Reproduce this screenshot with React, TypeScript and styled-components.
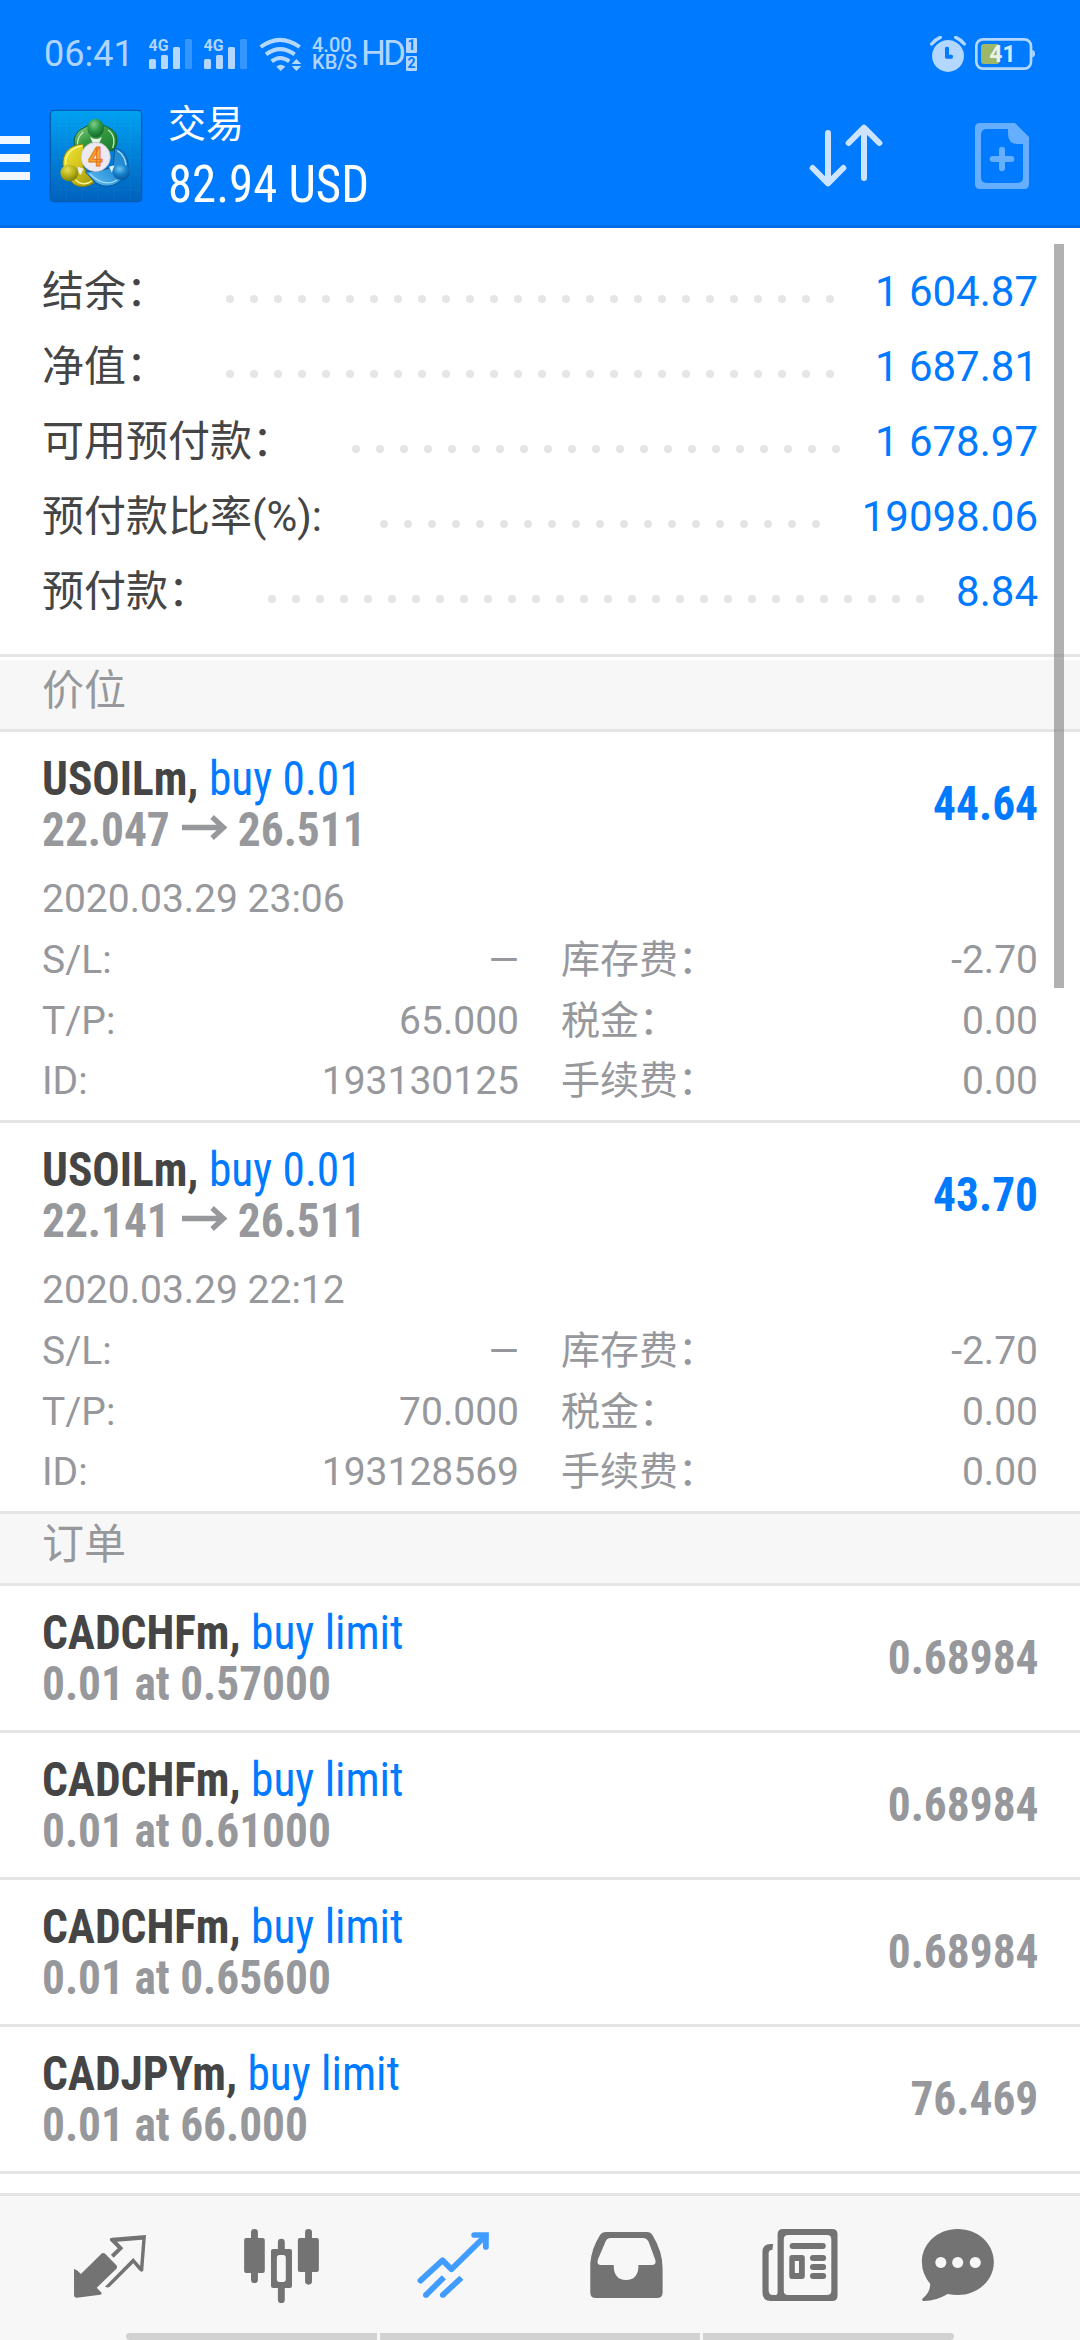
import React from "react";
import styled, { createGlobalStyle } from "styled-components";

const BLUE = "#007aff";
const GRAY = "#97989c";
const LINE = "#e5e5e5";

const GlobalStyle = createGlobalStyle`
  * { box-sizing: border-box; }
  body {
    margin: 0;
    font-family: Roboto, "Noto Sans CJK SC", sans-serif;
    background: #fff;
  }
`;

const Screen = styled.div`
  display: flex;
  flex-direction: column;
  width: 1080px;
  height: 2340px;
  overflow: hidden;
  background: #fff;
`;

const Header = styled.header`
  display: flex;
  flex-direction: column;
  height: 228px;
  flex: none;
  background: ${BLUE};
  border-bottom: 3px solid #006fe6;
`;

const StatusBar = styled.div`
  display: flex;
  align-items: center;
  height: 108px;
  padding: 0 45px 0 44px;
  color: rgba(255, 255, 255, 0.7);
`;

const Clock = styled.span`
  width: 105px;
  font-size: 36px;
  line-height: 112px;
`;

const StatusIcon = styled.svg`
  display: block;
  flex: none;
  fill: currentColor;
`;

const Speed = styled.div`
  display: flex;
  flex-direction: column;
  width: 50px;
  margin-left: 9px;
  font-size: 20px;
  font-weight: 500;
  line-height: 17px;
`;

const HdText = styled.span`
  width: 45px;
  flex: none;
  margin-left: -1px;
  font-size: 35px;
  letter-spacing: -3px;
  line-height: 110px;
`;

const SimBoxes = styled.div`
  display: flex;
  flex-direction: column;
  gap: 3px;
`;

const SimBox = styled.span`
  width: 11px;
  height: 15px;
  border-radius: 1px;
  background: rgba(255, 255, 255, 0.7);
  color: ${BLUE};
  font-size: 14px;
  font-weight: 700;
  line-height: 15px;
  text-align: center;
`;

const Spacer = styled.div`
  flex: 1;
`;

const TitleBar = styled.div`
  display: flex;
  height: 117px;
`;

const MenuButton = styled.div`
  display: flex;
  flex-direction: column;
  gap: 10px;
  width: 50px;
  padding-top: 28px;
`;

const MenuLine = styled.i`
  width: 30px;
  height: 8px;
  background: #f0f7ff;
`;

const Logo = styled.svg`
  display: block;
  width: 96px;
  height: 96px;
  margin-left: -2px;
`;

const Titles = styled.div`
  display: flex;
  flex-direction: column;
  margin-left: 24px;
  color: #fff;
`;

const ScreenName = styled.div`
  margin-top: -9px;
  font-size: 38px;
  line-height: 50px;
`;

const condensed = `
  font-family: "Roboto Condensed", Roboto, sans-serif;
  font-stretch: condensed;
  white-space: pre;
`;

const Profit = styled.div`
  ${condensed}
  font-size: 51px;
  line-height: 71px;
  transform: scaleX(0.957);
  transform-origin: left;
`;

const HeaderIcon = styled.svg`
  display: block;
  width: 320px;
  height: 117px;
`;

const Content = styled.main`
  position: relative;
  height: 1965px;
  overflow: hidden;
`;

const Scrollbar = styled.div`
  position: absolute;
  top: 16px;
  right: 16px;
  width: 10px;
  height: 744px;
  background: rgba(125, 125, 125, 0.6);
`;

const Summary = styled.section`
  padding: 26px 42px 25px;
  border-bottom: 3px solid ${LINE};
  margin-bottom: 3px;
`;

const SummaryRow = styled.div`
  display: flex;
  height: 75px;
  font-size: 42px;
  line-height: 75px;
  color: #454545;
  white-space: pre;
`;

const Leader = styled.div`
  display: flex;
  flex: 1;
  flex-wrap: wrap;
  gap: 16px;
  height: 8px;
  margin: 41px 28px 0 58px;
  overflow: hidden;
`;

const Dot = styled.i`
  width: 8px;
  height: 8px;
  border-radius: 50%;
  background: ${LINE};
`;

const SummaryValue = styled.span`
  color: ${BLUE};
`;

const SectionTitle = styled.h2`
  margin: 0;
  height: 72px;
  padding-left: 42px;
  border-bottom: 3px solid ${LINE};
  background: #f7f7f7;
  color: ${GRAY};
  font-size: 42px;
  font-weight: 400;
  line-height: 61px;
`;

const Item = styled.article<{ $tail: number }>`
  padding: 21px 42px ${(p) => p.$tail}px;
  border-bottom: 3px solid ${LINE};
`;

const ItemHead = styled.div`
  display: flex;
  align-items: center;
  justify-content: space-between;
  ${condensed}
  font-size: 48px;
  font-weight: 700;
  line-height: 51px;
  color: ${GRAY};
`;

const ItemInfo = styled.div`
  transform: scaleX(0.945);
  transform-origin: left;
`;

const ItemTitle = styled.div`
  color: #454545;
`;

const Side = styled.span`
  color: ${BLUE};
  font-weight: 400;
`;

const PriceLine = styled.div`
  display: flex;
`;

const ArrowIcon = styled.svg`
  display: block;
  width: 49px;
  height: 51px;
  margin: 0 10px 0 13px;
`;

const Amount = styled.div<{ $blue?: boolean }>`
  height: 53px;
  transform: scaleX(0.945);
  transform-origin: right;
  color: ${(p) => (p.$blue ? BLUE : GRAY)};
`;

const Details = styled.div`
  display: grid;
  grid-template-columns: 477px 477px;
  grid-template-rows: 61px 61px 60px 60px;
  column-gap: 42px;
  margin-top: 14px;
  margin-bottom: 1px;
  font-size: 39px;
  line-height: 61px;
  color: ${GRAY};
`;

const Opened = styled.div`
  grid-column: 1 / -1;
`;

const Pair = styled.div`
  display: flex;
  justify-content: space-between;
`;

const Nav = styled.nav`
  display: flex;
  flex-direction: column;
  height: 147px;
  border-top: 3px solid ${LINE};
  background: #f7f7f7;
`;

const Tabs = styled.div`
  display: grid;
  grid-template-columns: repeat(6, 172px);
  height: 137px;
  padding-left: 24px;
`;

const TabIcon = styled.svg<{ $active?: boolean }>`
  display: block;
  width: 172px;
  height: 137px;
  color: ${(p) => (p.$active ? "#409cff" : "#737373")};
  fill: currentColor;
`;

const GestureBar = styled.div`
  display: grid;
  grid-template-columns: 251px 320px 251px;
  gap: 3px;
  width: 828px;
  height: 7px;
  margin: 0 126px;
  border-radius: 4px;
  overflow: hidden;
`;

const GesturePart = styled.i`
  background: #d2d2d2;
`;

const summary = [
  ["结余：", "1 604.87"],
  ["净值：", "1 687.81"],
  ["可用预付款：", "1 678.97"],
  ["预付款比率(%):", "19098.06"],
  ["预付款：", "8.84"],
];

const positions = [
  { open: "22.047", now: "26.511", profit: "44.64", time: "2020.03.29 23:06", tp: "65.000", id: "193130125" },
  { open: "22.141", now: "26.511", profit: "43.70", time: "2020.03.29 22:12", tp: "70.000", id: "193128569" },
];

const orders = [
  { symbol: "CADCHFm,", price: "0.01 at 0.57000", now: "0.68984" },
  { symbol: "CADCHFm,", price: "0.01 at 0.61000", now: "0.68984" },
  { symbol: "CADCHFm,", price: "0.01 at 0.65600", now: "0.68984" },
  { symbol: "CADJPYm,", price: "0.01 at 66.000", now: "76.469" },
];

function Signal() {
  return (
    <StatusIcon width="55" height="36" viewBox="0 0 55 36">
      <text x="-0.5" y="14.6" fontSize="16" fontWeight="700" fontFamily="Roboto" textLength="20" lengthAdjust="spacingAndGlyphs">4G</text>
      <rect x="0" y="23" width="7" height="10" rx="1.5" />
      <rect x="12" y="19" width="7" height="14" rx="1.5" />
      <rect x="24" y="11" width="7" height="22" rx="1.5" />
      <rect x="36" y="3" width="7" height="30" rx="1.5" opacity=".3" />
    </StatusIcon>
  );
}

function Wifi() {
  return (
    <StatusIcon width="44" height="36" viewBox="777 108 132 108">
      <g fill="none" stroke="currentColor" strokeWidth="12">
        <path d="M782 141Q840 98 899 141" />
        <path d="M798 163Q840 132 884 163" />
        <path d="M815 184Q840 164 868 184" />
      </g>
      <path d="M829 200Q842 189 856 200L842 213ZM875 192L889 177L904 192ZM875 198H904L889 213Z" />
    </StatusIcon>
  );
}

function Alarm() {
  return (
    <StatusIcon width="45" height="36" viewBox="510 105 135 108">
      <path fillRule="evenodd" d="M564 117a48 48 0 1 0 .1 0ZM555 141q0-4 6-4t6 4v20h8q4 0 4 6t-4 6h-16q-4 0-4-4Z" />
      <path d="M515 129Q526 115 541 109M587 109Q602 115 613 129" fill="none" stroke="currentColor" strokeWidth="10" strokeLinecap="round" />
    </StatusIcon>
  );
}

function Battery() {
  return (
    <StatusIcon width="60" height="36" viewBox="645 108 180 108">
      <rect x="649" y="118" width="164" height="88" rx="20" fill="none" stroke="currentColor" strokeWidth="8" />
      <path d="M817 150q8 2 8 11t-8 11Z" />
      <rect x="663" y="132" width="56" height="60" rx="9" fill="#9db668" />
      <text x="688" y="186" fontSize="69" fontWeight="700" fontFamily="Roboto" fill="#fff" opacity=".82">41</text>
    </StatusIcon>
  );
}

function AppLogo() {
  return (
    <Logo viewBox="144 324 288 288">
      <defs>
        <linearGradient id="tile" x1="0" y1="0" x2="0" y2="1">
          <stop offset="0" stopColor="#00a2f2" />
          <stop offset=".5" stopColor="#0080d8" />
          <stop offset="1" stopColor="#0062bd" />
        </linearGradient>
        <linearGradient id="green" x1="0" y1="0" x2="1" y2="1">
          <stop offset="0" stopColor="#8fd08a" />
          <stop offset=".45" stopColor="#359a42" />
          <stop offset="1" stopColor="#17782a" />
        </linearGradient>
        <linearGradient id="yellow" x1="0" y1="0" x2="1" y2="1">
          <stop offset="0" stopColor="#f3ea3c" />
          <stop offset=".5" stopColor="#d4c51b" />
          <stop offset="1" stopColor="#96930f" />
        </linearGradient>
        <linearGradient id="blue" x1="1" y1="0" x2="0" y2="1">
          <stop offset="0" stopColor="#1b83cf" />
          <stop offset=".5" stopColor="#2d93da" />
          <stop offset="1" stopColor="#66c4f4" />
        </linearGradient>
        <radialGradient id="headGreen" cx=".4" cy=".3" r=".75">
          <stop offset="0" stopColor="#7fce86" />
          <stop offset=".5" stopColor="#2c9747" />
          <stop offset="1" stopColor="#116225" />
        </radialGradient>
        <radialGradient id="headYellow" cx=".4" cy=".3" r=".75">
          <stop offset="0" stopColor="#e6e052" />
          <stop offset=".5" stopColor="#b9b21c" />
          <stop offset="1" stopColor="#747a0a" />
        </radialGradient>
        <radialGradient id="headBlue" cx=".4" cy=".3" r=".75">
          <stop offset="0" stopColor="#69c3f4" />
          <stop offset=".5" stopColor="#1682cc" />
          <stop offset="1" stopColor="#075298" />
        </radialGradient>
      </defs>
      <rect x="151" y="331" width="274" height="274" rx="11" fill="url(#tile)" stroke="#075bb0" strokeWidth="4" />
      <path d="M198 334V602M246 334V602M294 334V602M342 334V602M390 334V602M154 378H422M154 426H422M154 474H422M154 522H422M154 570H422" stroke="#fff" strokeOpacity=".07" strokeWidth="2" />
      <path d="M243 388C218 404 216 438 236 452L340 452C358 430 354 398 331 386L316 378H262Z" fill="url(#green)" stroke="#14602e" strokeWidth="3" />
      <path d="M250 396C236 408 230 424 234 440M324 390C342 402 346 424 338 444" fill="none" stroke="#c3edb4" strokeWidth="4" />
      <path d="M251 432C208 434 184 462 190 500L214 545C232 566 262 562 282 548L250 500Z" fill="url(#yellow)" stroke="#7f7e12" strokeWidth="3" />
      <path d="M246 438C214 442 194 466 197 494M226 538C240 556 262 554 276 542" fill="none" stroke="#fbf790" strokeWidth="4" />
      <path d="M344 444C374 448 390 482 382 512L366 538C344 562 312 564 288 548L256 516L300 512L340 500Z" fill="url(#blue)" stroke="#0a579c" strokeWidth="3" />
      <path d="M352 452C370 462 380 484 377 504M270 522C292 544 322 558 352 540" fill="none" stroke="#a5dcfa" strokeWidth="4" />
      <path d="M270 410Q288 424 306 410L298 428H278Z" fill="#e8f3e8" />
      <path d="M234 500L250 506L243 524Q232 520 234 500ZM327 500L343 496Q338 514 336 518Z" fill="#e8eef0" />
      <ellipse cx="287" cy="384" rx="25" ry="28" fill="url(#headGreen)" />
      <ellipse cx="208" cy="519" rx="27" ry="25" fill="url(#headYellow)" />
      <ellipse cx="364" cy="516" rx="27" ry="23" fill="url(#headBlue)" />
      <circle cx="287" cy="471" r="44" fill="#eceaf0" stroke="#b9b6bd" strokeWidth="2" />
      <text x="265" y="497" fontFamily="Roboto" fontSize="76" fontWeight="700" fill="#ffab2e" stroke="#e2731c" strokeWidth="3">4</text>
    </Logo>
  );
}

function HeaderActions() {
  return (
    <HeaderIcon viewBox="0 324 960 351">
      <g fill="none" stroke="#cce4ff" strokeWidth="18" strokeLinecap="round" strokeLinejoin="round">
        <path d="M204 399V548M158 504L204 550L250 504" />
        <path d="M312 534V384M266 429L312 383L358 429" />
      </g>
      <g fill="#66afff">
        <path fillRule="evenodd" d="M660 369H765L807 411V552Q807 567 792 567H660Q645 567 645 552V384Q645 369 660 369ZM744 387H680Q663 387 663 404V532Q663 549 680 549H772Q789 549 789 532V432H774Q744 432 744 402Z" />
        <path d="M726 449V505M698 477H754" stroke="#66afff" strokeWidth="18" strokeLinecap="round" />
      </g>
    </HeaderIcon>
  );
}

const tabs = [
  {
    x: 69.7,
    art: (
      <>
        <path d="M215 326Q225 330 235 342L293 283Q299 276 306 282L338 316Q342 321 338 326L281 383L293 396Q298 402 291 404L223 413Q215 413 215 404Z" />
        <path fillRule="evenodd" d="M424 225L416 333Q411 338 404 331L387 310L323 376Q317 386 305 380L387 294L407 318L413 239L340 245L358 265L330 293L322 284L342 265L320 242Q316 233 326 233Z" />
      </>
    ),
  },
  {
    x: 569.2,
    art: (
      <>
        <path d="M739 217V359M896 217V364M817 246V275M817 380V419" stroke="currentColor" strokeWidth="20" strokeLinecap="round" />
        <rect x="709" y="234" width="60" height="105" rx="6" />
        <rect x="865" y="234" width="61" height="102" rx="6" />
        <path fillRule="evenodd" d="M793 267H842Q848 267 848 273V378Q848 384 842 384H793Q787 384 787 378V273Q787 267 793 267ZM812 285Q804 285 804 293V358Q804 366 812 366H822Q830 366 830 358V293Q830 285 822 285Z" />
      </>
    ),
  },
  {
    x: 1068.7,
    active: true,
    art: (
      <g fill="none" stroke="currentColor" strokeWidth="17">
        <path d="M1221 362L1285 301L1311 328L1410 227" strokeLinejoin="round" strokeLinecap="round" />
        <path d="M1377 225H1411V261" strokeLinecap="round" />
        <path d="M1237 405L1289 352M1286 405L1340 353" />
        <circle cx="1237" cy="405" r="8.5" fill="currentColor" stroke="none" />
        <circle cx="1286" cy="405" r="8.5" fill="currentColor" stroke="none" />
      </g>
    ),
  },
  {
    x: 0,
    art: (
      <path fillRule="evenodd" d="M192 216H311Q321 216 327 226Q356 275 356 325V398Q356 414 340 414H162Q146 414 146 398V310Q150 265 174 226Q180 216 192 216ZM206 234Q195 234 191 243L169 296Q163 315 176 315H214Q214 360 250 360Q286 360 286 315H325Q338 315 335 300L316 247Q311 234 298 234Z" />
    ),
  },
  {
    x: 499.5,
    art: (
      <>
        <path fillRule="evenodd" d="M706 207H848Q864 207 864 223V407Q864 423 848 423H670Q646 423 646 397V275Q646 252 670 252H677L675 269Q664 269 664 281V391Q664 405 676 405H684Q690 405 690 398V223Q690 207 706 207ZM721 225Q708 225 708 238V392Q708 405 721 405H833Q846 405 846 392V238Q846 225 833 225Z" />
        <path d="M734 258H821M793 294H822M793 321H822M793 348H822" stroke="currentColor" strokeWidth="18" strokeLinecap="round" />
        <path fillRule="evenodd" d="M732 285H761Q769 285 769 293V348Q769 357 761 357H732Q724 357 724 348V293Q724 285 732 285ZM740 303V339H752V303Z" />
      </>
    ),
  },
  {
    x: 999,
    art: (
      <path fillRule="evenodd" d="M1213 207C1272 207 1318 251 1318 306C1318 361 1272 405 1213 405Q1198 405 1184 402Q1148 424 1113 423Q1106 419 1113 414Q1134 396 1133 371Q1109 342 1109 306C1109 251 1155 207 1213 207ZM1164 291a16 16.5 0 1 0 .1 0ZM1213 291a16 16.5 0 1 0 .1 0ZM1264 291a16 16.5 0 1 0 .1 0Z" />
    ),
  },
];

export default function App() {
  return (
    <Screen>
      <GlobalStyle />
      <Header>
        <StatusBar>
          <Clock>06:41</Clock>
          <Signal />
          <Signal />
          <Wifi />
          <Speed>
            <span>4.00</span>
            <span>KB/S</span>
          </Speed>
          <HdText>HD</HdText>
          <SimBoxes>
            <SimBox>1</SimBox>
            <SimBox>2</SimBox>
          </SimBoxes>
          <Spacer />
          <Alarm />
          <Battery />
        </StatusBar>
        <TitleBar>
          <MenuButton>
            <MenuLine />
            <MenuLine />
            <MenuLine />
          </MenuButton>
          <AppLogo />
          <Titles>
            <ScreenName>交易</ScreenName>
            <Profit>82.94 USD</Profit>
          </Titles>
          <Spacer />
          <HeaderActions />
        </TitleBar>
      </Header>
      <Content>
        <Summary>
          {summary.map(([label, value]) => (
            <SummaryRow key={label}>
              <span>{label}</span>
              <Leader>
                {Array.from({ length: 34 }, (_, i) => (
                  <Dot key={i} />
                ))}
              </Leader>
              <SummaryValue>{value}</SummaryValue>
            </SummaryRow>
          ))}
        </Summary>
        <SectionTitle>价位</SectionTitle>
        {positions.map((p) => (
          <Item key={p.id} $tail={8}>
            <ItemHead>
              <ItemInfo>
                <ItemTitle>
                  USOILm, <Side>buy 0.01</Side>
                </ItemTitle>
                <PriceLine>
                  {p.open}
                  <ArrowIcon viewBox="0 0 49 51">
                    <path d="M0 23.5H43M32 13L44 23.5L32 34" fill="none" stroke={GRAY} strokeWidth="5.5" />
                  </ArrowIcon>
                  {p.now}
                </PriceLine>
              </ItemInfo>
              <Amount $blue>{p.profit}</Amount>
            </ItemHead>
            <Details>
              <Opened>{p.time}</Opened>
              <Pair><span>S/L:</span><span>—</span></Pair>
              <Pair><span>库存费：</span><span>-2.70</span></Pair>
              <Pair><span>T/P:</span><span>{p.tp}</span></Pair>
              <Pair><span>税金：</span><span>0.00</span></Pair>
              <Pair><span>ID:</span><span>{p.id}</span></Pair>
              <Pair><span>手续费：</span><span>0.00</span></Pair>
            </Details>
          </Item>
        ))}
        <SectionTitle>订单</SectionTitle>
        {orders.map((o) => (
          <Item key={o.price} $tail={21}>
            <ItemHead>
              <ItemInfo>
                <ItemTitle>
                  {o.symbol} <Side>buy limit</Side>
                </ItemTitle>
                <PriceLine>{o.price}</PriceLine>
              </ItemInfo>
              <Amount>{o.now}</Amount>
            </ItemHead>
          </Item>
        ))}
        <Scrollbar />
      </Content>
      <Nav>
        <Tabs>
          {tabs.map((t) => (
            <TabIcon key={t.x} $active={t.active} viewBox={`${t.x} 108 499.5 411`} preserveAspectRatio="none">
              {t.art}
            </TabIcon>
          ))}
        </Tabs>
        <GestureBar>
          <GesturePart />
          <GesturePart />
          <GesturePart />
        </GestureBar>
      </Nav>
    </Screen>
  );
}
